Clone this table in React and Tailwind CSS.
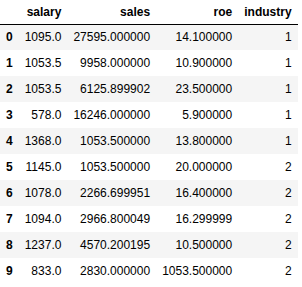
import React from "react";

const rows = [
  ["0", "1095.0", "27595.000000", "14.100000", "1"],
  ["1", "1053.5", "9958.000000", "10.900000", "1"],
  ["2", "1053.5", "6125.899902", "23.500000", "1"],
  ["3", "578.0", "16246.000000", "5.900000", "1"],
  ["4", "1368.0", "1053.500000", "13.800000", "1"],
  ["5", "1145.0", "1053.500000", "20.000000", "2"],
  ["6", "1078.0", "2266.699951", "16.400000", "2"],
  ["7", "1094.0", "2966.800049", "16.299999", "2"],
  ["8", "1237.0", "4570.200195", "10.500000", "2"],
  ["9", "833.0", "2830.000000", "1053.500000", "2"],
];

export default function App() {
  return (
    <div className="w-[302px] h-[287px] bg-white overflow-hidden text-black text-[12px] font-['Liberation_Sans',Arial,sans-serif]">
      <table className="border-collapse">
        <thead>
          <tr className="h-[24px] border-b border-black">
            <th className="px-[6px] py-0 text-right font-bold"></th>
            <th className="px-[6px] py-0 text-right font-bold">salary</th>
            <th className="px-[6px] py-0 text-right font-bold">sales</th>
            <th className="px-[6px] py-0 text-right font-bold">roe</th>
            <th className="px-[6px] py-0 text-right font-bold">industry</th>
          </tr>
        </thead>
        <tbody>
          {rows.map((r, i) => (
            <tr key={i} className={"h-[26px] " + (i % 2 === 0 ? "bg-[#f5f5f5]" : "bg-white")}>
              <th className="px-[6px] py-0 text-right font-bold">{r[0]}</th>
              <td className="px-[6px] py-0 text-right">{r[1]}</td>
              <td className="px-[6px] py-0 text-right">{r[2]}</td>
              <td className="px-[6px] py-0 text-right">{r[3]}</td>
              <td className="px-[6px] py-0 text-right">{r[4]}</td>
            </tr>
          ))}
        </tbody>
      </table>
    </div>
  );
}
